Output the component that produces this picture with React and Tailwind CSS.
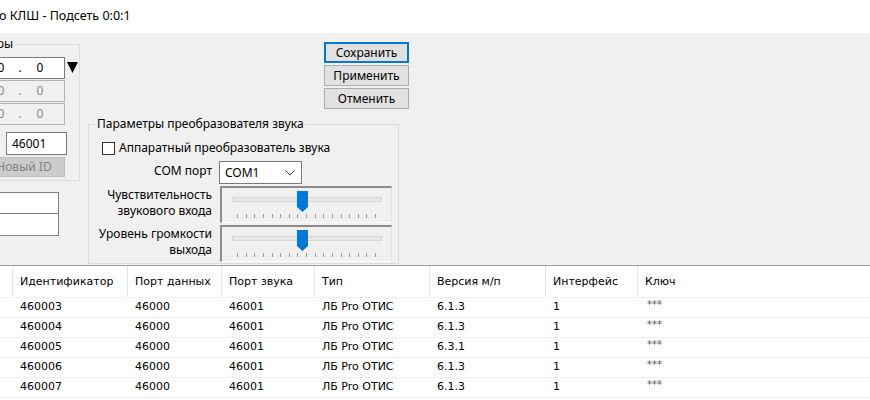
import React from 'react'

const rows = [
  ['460003', '46000', '46001', 'ЛБ Pro ОТИС', '6.1.3', '1'],
  ['460004', '46000', '46001', 'ЛБ Pro ОТИС', '6.1.3', '1'],
  ['460005', '46000', '46001', 'ЛБ Pro ОТИС', '6.3.1', '1'],
  ['460006', '46000', '46001', 'ЛБ Pro ОТИС', '6.1.3', '1'],
  ['460007', '46000', '46001', 'ЛБ Pro ОТИС', '6.1.3', '1'],
]

const headers = ['Идентификатор', 'Порт данных', 'Порт звука', 'Тип', 'Версия м/п', 'Интерфейс', 'Ключ']

function IpBox({ enabled }) {
  return (
    <div
      className={`h-[22px] w-[125px] flex items-center justify-end pr-[9px] overflow-hidden border ${
        enabled ? 'bg-white border-[#7a7a7a] text-black' : 'bg-[#f0f0f0] border-[#b4b4b4] text-[#8a8a8a]'
      }`}
    >
      <span className="w-[28px] shrink-0 text-center">0</span>
      <span className="w-[10px] shrink-0 text-center">.</span>
      <span className="w-[28px] shrink-0 text-center">0</span>
      <span className="w-[10px] shrink-0 text-center">.</span>
      <span className="w-[28px] shrink-0 text-center">0</span>
      <span className="w-[10px] shrink-0 text-center">.</span>
      <span className="w-[30px] shrink-0 text-center">0</span>
    </div>
  )
}

function Slider() {
  const ticks = Array.from({ length: 17 }, (_, i) => 15 + i * 8.625)
  return (
    <div className="w-[172px] h-[37px] bg-[#f0f0f0] border-t-2 border-l-2 border-t-[#8c8c8c] border-l-[#8c8c8c] border-r border-b border-r-[#e3e3e3] border-b-white">
      <svg width="169" height="34" viewBox="0 0 169 34">
        <rect x="10.5" y="9.5" width="149" height="4" fill="#e7e7e7" stroke="#d6d6d6" />
        {ticks.map((x) => (
          <rect key={x} x={Math.round(x)} y="26" width="1" height="4" fill="#9a9a9a" />
        ))}
        <path d="M75 3 H86 V19 L80.5 24 L75 19 Z" fill="#0078d7" />
      </svg>
    </div>
  )
}

function Btn({ children, focused }) {
  return (
    <button
      className={`w-[85px] h-[21px] bg-[#e1e1e1] text-[12px] leading-none text-black ${
        focused ? 'border-2 border-[#0078d7]' : 'border border-[#adadad]'
      }`}
    >
      {children}
    </button>
  )
}

export default function App() {
  return (
    <div className="w-[870px] h-[400px] overflow-hidden flex flex-col bg-white font-['Noto_Sans',sans-serif] text-[12px] text-black">
      {/* title bar */}
      <div className="h-[33px] shrink-0 bg-white flex items-center -ml-[1px]">
        <span className="text-[12.5px]">о КЛШ - Подсеть 0:0:1</span>
      </div>

      {/* settings area */}
      <div className="h-[232px] shrink-0 bg-[#f0f0f0] flex overflow-hidden">
        {/* left column, cut by the window edge */}
        <div className="w-[88px] shrink-0 flex flex-col items-end">
          <fieldset className="mt-[4px] w-[140px] mr-[8px] h-[144px] border border-[#dcdcdc] flex flex-col">
            <legend className="ml-[4px] px-[2px] leading-[14px]">Параметры</legend>
            <div className="mt-[6px] flex justify-end">
              <div className="flex flex-col gap-[1px]">
                <IpBox enabled />
                <IpBox />
                <IpBox />
              </div>
              <div className="w-[13px] ml-[1px] pt-[5px] flex justify-center">
                <svg width="11" height="11" viewBox="0 0 11 11">
                  <path d="M0 0 H11 L5.5 11 Z" fill="#000" />
                </svg>
              </div>
            </div>
            <div className="mt-[7px] flex justify-end pr-[12px]">
              <div className="w-[61px] h-[23px] bg-white border border-[#7a7a7a] flex items-center pl-[5px]">46001</div>
            </div>
            <div className="mt-[2px] flex justify-end pr-[14px]">
              <div className="w-[82px] h-[20px] bg-[#cccccc] border border-[#bfbfbf] text-[#838383] flex items-center justify-center">
                Новый ID
              </div>
            </div>
          </fieldset>
          <div className="mt-[11px] mr-[29px] w-[80px] border border-[#828282] bg-white flex flex-col">
            <div className="h-[21px] border-b border-[#828282]" />
            <div className="h-[21px]" />
          </div>
        </div>

        {/* middle column */}
        <div className="w-[311px] shrink-0 flex flex-col">
          <div className="mt-[9px] pl-[236px] flex flex-col gap-[2px]">
            <Btn focused>Сохранить</Btn>
            <Btn>Применить</Btn>
            <Btn>Отменить</Btn>
          </div>
          <fieldset className="mt-[8px] h-[147px] border border-[#dcdcdc] flex flex-col">
            <legend className="ml-[6px] px-[2px] leading-[14px]">Параметры преобразователя звука</legend>
            <div className="mt-[8px] pl-[13px] flex items-center">
              <div className="w-[13px] h-[13px] bg-white border border-[#333333]" />
              <span className="ml-[4px]">Аппаратный преобразователь звука</span>
            </div>
            <div className="mt-[4px] flex items-start">
              <span className="w-[123px] text-right pt-[1px]">COM порт</span>
              <div className="ml-[7px] w-[83px] h-[23px] bg-white border border-[#7a7a7a] flex items-center justify-between pl-[5px] pr-[6px]">
                <span>COM1</span>
                <svg width="10" height="6" viewBox="0 0 10 6">
                  <path d="M0.5 0.5 L5 5 L9.5 0.5" fill="none" stroke="#444" strokeWidth="1" />
                </svg>
              </div>
            </div>
            <div className="mt-[2px] flex items-start">
              <span className="w-[123px] text-right leading-[16px] pt-[1px]">
                Чувствительность
                <br />
                звукового входа
              </span>
              <div className="ml-[8px]">
                <Slider />
              </div>
            </div>
            <div className="mt-[2px] flex items-start">
              <span className="w-[123px] text-right leading-[16px] pt-[1px]">
                Уровень громкости
                <br />
                выхода
              </span>
              <div className="ml-[8px]">
                <Slider />
              </div>
            </div>
          </fieldset>
        </div>
      </div>

      {/* devices table */}
      <div className="flex-1 bg-white border-t border-[#a0a0a0] font-['DejaVu_Sans',sans-serif] text-[11px] text-black">
        <div className="grid grid-cols-[13px_115px_94px_93px_115px_116px_92px_1fr] h-[32px] border-b border-[#f0f0f0]">
          <div className="border-r border-[#e5e5e5]" />
          {headers.map((h) => (
            <div key={h} className="border-r border-[#e5e5e5] last:border-r-0 flex items-center pl-[7px] pt-[1px]">
              {h}
            </div>
          ))}
        </div>
        {rows.map((r) => (
          <div key={r[0]} className="grid grid-cols-[13px_115px_94px_93px_115px_116px_92px_1fr] h-[20px] border-b border-[#f0f0f0]">
            <div />
            {r.map((c, i) => (
              <div key={i} className="flex items-center pl-[7px]">
                {c}
              </div>
            ))}
            <div className="pl-[9px] pt-[1px] text-[10px] leading-[12px] text-[#555]">***</div>
          </div>
        ))}
      </div>
    </div>
  )
}
